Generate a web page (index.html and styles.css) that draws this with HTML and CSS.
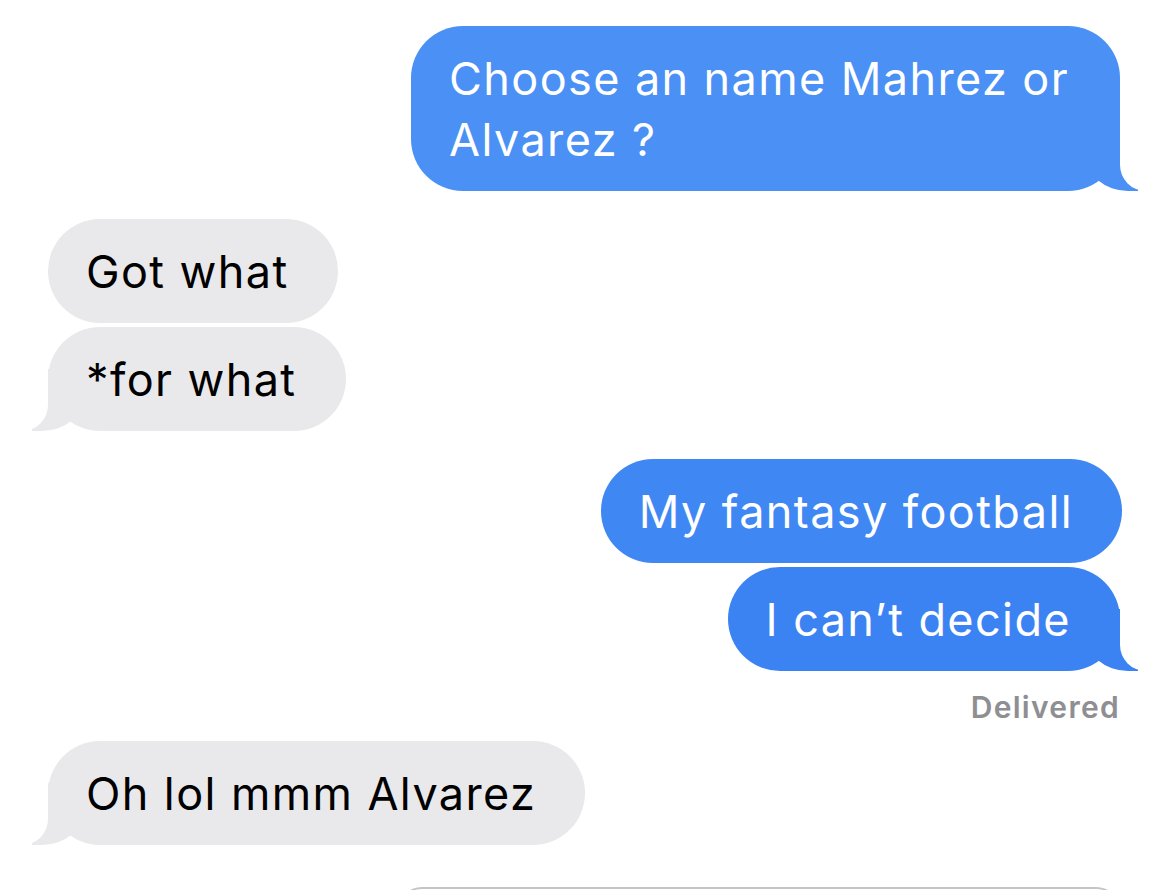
FILE: index.html
```html
<!DOCTYPE html>
<html lang="en">
<head>
<meta charset="utf-8">
<title>Messages</title>
<link rel="stylesheet" href="styles.css">
</head>
<body>
<main class="thread">
  <div class="row row-sent">
    <div class="bubble sent sent-top tail">Choose an name Mahrez or Alvarez ?</div>
  </div>
  <div class="group">
    <div class="row row-recv"><div class="bubble recv">Got what</div></div>
    <div class="row row-recv"><div class="bubble recv tail">*for what</div></div>
  </div>
  <div class="group">
    <div class="row row-sent"><div class="bubble sent sent-mid narrow-end">My fantasy football</div></div>
    <div class="row row-sent"><div class="bubble sent sent-low tail">I can’t decide</div></div>
    <div class="status">Delivered</div>
  </div>
  <div class="row row-recv"><div class="bubble recv tail">Oh lol mmm Alvarez</div></div>
  <div class="row row-sent"><div class="next-edge"></div></div>
</main>
</body>
</html>
```
FILE: styles.css
```css
html, body {
  margin: 0;
  padding: 0;
  background: #ffffff;
}
body {
  width: 1170px;
  height: 890px;
  overflow: hidden;
  font-family: Inter, "Noto Sans", "Liberation Sans", sans-serif;
}
.thread {
  display: flex;
  flex-direction: column;
  gap: 28px;
  padding: 26px 50px 0 48px;
}
.group {
  display: flex;
  flex-direction: column;
  gap: 4px;
}
.row {
  display: flex;
}
.row-sent {
  justify-content: flex-end;
}
.row-recv {
  justify-content: flex-start;
}
.bubble {
  position: relative;
  font-size: 45px;
  line-height: 61px;
  padding: 21.5px 49px 21.5px 38px;
  border-radius: 52px;
  letter-spacing: 1.4px;
  max-width: 622px;
}
.narrow-end {
  margin-right: -2px;
}
.sent {
  color: #ffffff;
}
.sent-top {
  background: #4a90f5;
  --bc: #4a90f5;
}
.sent-mid {
  background: #3f87f3;
  --bc: #3f87f3;
}
.sent-low {
  background: #3b83f2;
  --bc: #3b83f2;
}
.recv {
  color: #000000;
  background: #e9e9eb;
  --bc: #e9e9eb;
}
.tail::before,
.tail::after {
  content: "";
  position: absolute;
  bottom: 0;
  height: 62px;
}
.sent.tail::before {
  right: -18px;
  width: 52px;
  background: var(--bc);
  border-bottom-left-radius: 42px 36px;
}
.sent.tail::after {
  right: -68px;
  width: 68px;
  background: #ffffff;
  border-bottom-left-radius: 26px;
}
.recv.tail::before {
  left: -16px;
  width: 52px;
  background: var(--bc);
  border-bottom-right-radius: 42px 36px;
}
.recv.tail::after {
  left: -68px;
  width: 68px;
  background: #ffffff;
  border-bottom-right-radius: 26px;
}
.status {
  align-self: flex-end;
  margin-top: 14px;
  margin-bottom: -12px;
  font-size: 30px;
  line-height: 36px;
  font-weight: 600;
  letter-spacing: 1.3px;
  color: #8e8e93;
}
.next-edge {
  width: 722px;
  height: 40px;
  margin-top: 14px;
  border-top: 2px solid #c4c4c6;
  border-radius: 24px 24px 0 0;
}
```
